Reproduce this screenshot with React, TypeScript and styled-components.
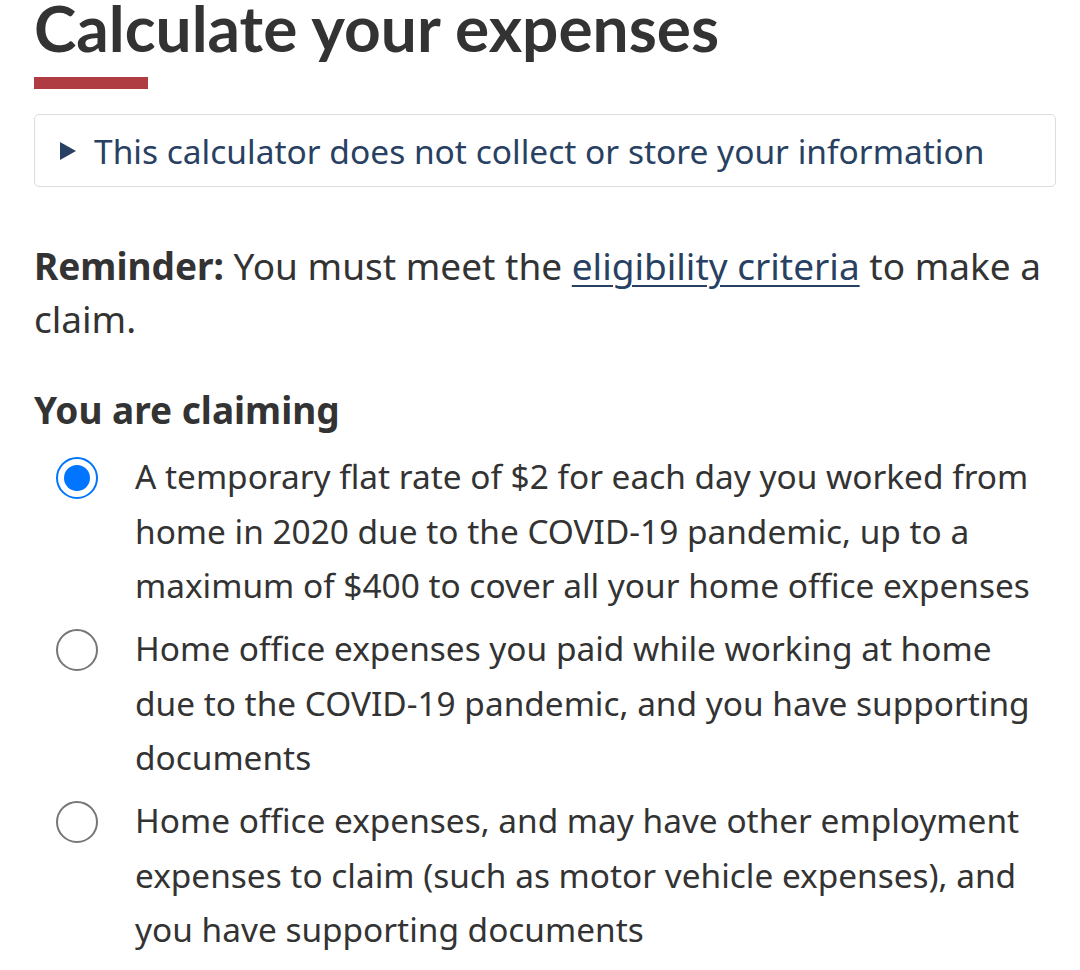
import React, { useState } from "react";
import styled, { createGlobalStyle } from "styled-components";

const GlobalStyle = createGlobalStyle`
    html, body {
        margin: 0;
        padding: 0;
        background: #fff;
    }
    body {
        font-family: "Noto Sans", "DejaVu Sans", sans-serif;
        color: #333;
    }
`;

const Page = styled.main`
    padding: 0 24px 0 34px;
    width: 1080px;
    box-sizing: border-box;
`;

const Title = styled.h1`
    margin: 0;
    font-family: Lato, "Liberation Sans", sans-serif;
    font-weight: 700;
    font-size: 64px;
    line-height: 64px;
    color: #333;
    margin-top: -4px;
    padding-bottom: 16px;
    &::after {
        content: "";
        display: block;
        width: 114px;
        height: 12px;
        background: #af3c43;
        margin-top: 17px;
    }
`;

const Details = styled.div`
    margin-top: 9px;
    border: 1px solid #ddd;
    border-radius: 5px;
    height: 71px;
    display: flex;
    align-items: center;
    padding-left: 25px;
    gap: 18px;
    color: #284162;
    font-size: 33.5px;
    cursor: pointer;
`;

const Triangle = styled.span`
    flex: none;
    width: 0;
    height: 0;
    border-top: 9px solid transparent;
    border-bottom: 9px solid transparent;
    border-left: 16px solid #284162;
`;

const Reminder = styled.p`
    margin: 52px 0 0;
    font-size: 37px;
    line-height: 53px;
`;

const Link = styled.a`
    color: #284162;
    text-decoration: underline;
    text-underline-offset: 5px;
    text-decoration-thickness: 2px;
`;

const Legend = styled.h2`
    margin: 45px 0 0;
    font-size: 37px;
    font-weight: 700;
    line-height: 40px;
`;

const Options = styled.div`
    margin-top: 19px;
    display: flex;
    flex-direction: column;
    gap: 8.5px;
`;

const Option = styled.label`
    display: flex;
    align-items: flex-start;
    gap: 37px;
    padding: 0 14px 0 22px;
    font-size: 33.4px;
    line-height: 54.5px;
    cursor: pointer;
`;

const Radio = styled.span<{ $checked: boolean }>`
    flex: none;
    margin-top: 8px;
    width: 42px;
    height: 42px;
    box-sizing: border-box;
    border-radius: 50%;
    border: 2px solid ${(p) => (p.$checked ? "#0075ff" : "#767676")};
    display: flex;
    align-items: center;
    justify-content: center;
    &::after {
        content: "";
        width: 26px;
        height: 26px;
        border-radius: 50%;
        background: ${(p) => (p.$checked ? "#0075ff" : "transparent")};
    }
`;

const options = [
    "A temporary flat rate of $2 for each day you worked from home in 2020 due to the COVID-19 pandemic, up to a maximum of $400 to cover all your home office expenses",
    "Home office expenses you paid while working at home due to the COVID-19 pandemic, and you have supporting documents",
    "Home office expenses, and may have other employment expenses to claim (such as motor vehicle expenses), and you have supporting documents",
];

export default function App() {
    const [selected, setSelected] = useState(0);

    return (
        <Page>
            <GlobalStyle />
            <Title>Calculate your expenses</Title>
            <Details>
                <Triangle />
                This calculator does not collect or store your information
            </Details>
            <Reminder>
                <strong>Reminder:</strong> You must meet the{" "}
                <Link href="#">eligibility criteria</Link> to make a claim.
            </Reminder>
            <Legend>You are claiming</Legend>
            <Options>
                {options.map((text, i) => (
                    <Option key={i} onClick={() => setSelected(i)}>
                        <Radio $checked={selected === i} />
                        <span>{text}</span>
                    </Option>
                ))}
            </Options>
        </Page>
    );
}
